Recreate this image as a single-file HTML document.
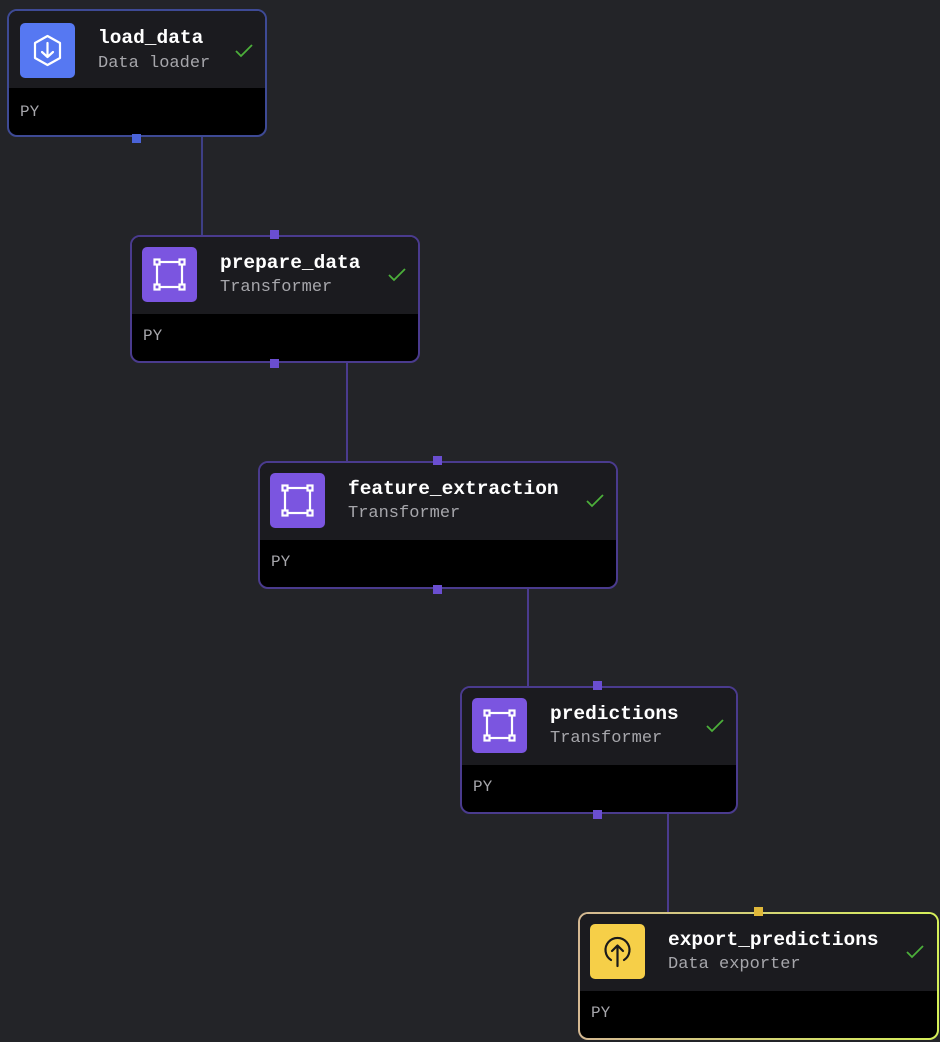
<!DOCTYPE html>
<html><head><style>
body{margin:0;width:940px;height:1042px;background:#232428;position:relative;overflow:hidden;font-family:"Liberation Mono","DejaVu Sans Mono",monospace}
.n{position:absolute;box-sizing:border-box;height:128px;border:2px solid #4a3b8e;border-radius:10px;background:#000;overflow:hidden}
.h{position:absolute;left:0;right:0;top:0;height:77px;background:#1b1b1f}
.ic{position:absolute;left:10px;top:10px;width:55px;height:55px;border-radius:5px;background:#7b55e0}
.ic svg{position:absolute;left:0;top:0}
.t{position:absolute;top:14px;color:#fff;font-weight:bold;font-size:19.5px;line-height:24px}
.s{position:absolute;top:41px;color:#a6a6ab;font-size:17px;line-height:20px}
.ck{position:absolute;top:30px}
.py{position:absolute;left:11px;top:90px;color:#a6a6ab;font-size:16px}
.ln{position:absolute;width:2px;background:#4a3b8e}
.p{position:absolute;width:9px;height:9px;background:#6a4ed0}
</style></head><body>
<div class="ln" style="left:201px;top:137px;height:99px;background:#3e3f86"></div>
<div class="ln" style="left:346px;top:362px;height:100px"></div>
<div class="ln" style="left:527px;top:588px;height:99px"></div>
<div class="ln" style="left:667px;top:813px;height:100px"></div>

<div class="n" style="left:7px;top:9px;width:260px;border-color:#3e4a95">
<div class="h"></div>
<div class="ic" style="left:11px;top:12px;background:#5678f2"><svg width="55" height="55" viewBox="0 0 55 55" fill="none" stroke="#fff" stroke-width="2.2" stroke-linecap="round" stroke-linejoin="round"><path d="M27.5 13 L40 20 L40 35 L27.5 42 L15 35 L15 20 Z"/><path d="M27.5 20 V34 M22 29 L27.5 34 L33 29"/></svg></div>
<div class="t" style="left:89px;top:15px">load_data</div><div class="s" style="left:89px;top:43px">Data loader</div>
<svg class="ck" style="left:225px;top:32px" width="20" height="16" viewBox="0 0 20 16"><path d="M2 8 L7 13 L18 2" fill="none" stroke="#4caf3a" stroke-width="1.8"/></svg>
<div class="py" style="top:92px">PY</div></div>
<div class="p" style="left:132px;top:134px;background:#4a63d8"></div>

<div class="n" style="left:130px;top:235px;width:290px">
<div class="h"></div>
<div class="ic"><svg width="55" height="55" viewBox="0 0 55 55" fill="none" stroke="#fff" stroke-width="2.2"><rect x="15" y="15" width="25" height="25"/><rect x="12.5" y="12.5" width="5" height="5" fill="#7b55e0"/><rect x="37.5" y="12.5" width="5" height="5" fill="#7b55e0"/><rect x="12.5" y="37.5" width="5" height="5" fill="#7b55e0"/><rect x="37.5" y="37.5" width="5" height="5" fill="#7b55e0"/></svg></div>
<div class="t" style="left:88px">prepare_data</div><div class="s" style="left:88px">Transformer</div>
<svg class="ck" style="left:255px" width="20" height="16" viewBox="0 0 20 16"><path d="M2 8 L7 13 L18 2" fill="none" stroke="#4caf3a" stroke-width="1.8"/></svg>
<div class="py">PY</div></div>
<div class="p" style="left:270px;top:230px"></div><div class="p" style="left:270px;top:359px"></div>

<div class="n" style="left:258px;top:461px;width:360px">
<div class="h"></div>
<div class="ic"><svg width="55" height="55" viewBox="0 0 55 55" fill="none" stroke="#fff" stroke-width="2.2"><rect x="15" y="15" width="25" height="25"/><rect x="12.5" y="12.5" width="5" height="5" fill="#7b55e0"/><rect x="37.5" y="12.5" width="5" height="5" fill="#7b55e0"/><rect x="12.5" y="37.5" width="5" height="5" fill="#7b55e0"/><rect x="37.5" y="37.5" width="5" height="5" fill="#7b55e0"/></svg></div>
<div class="t" style="left:88px">feature_extraction</div><div class="s" style="left:88px">Transformer</div>
<svg class="ck" style="left:325px" width="20" height="16" viewBox="0 0 20 16"><path d="M2 8 L7 13 L18 2" fill="none" stroke="#4caf3a" stroke-width="1.8"/></svg>
<div class="py">PY</div></div>
<div class="p" style="left:433px;top:456px"></div><div class="p" style="left:433px;top:585px"></div>

<div class="n" style="left:460px;top:686px;width:278px">
<div class="h"></div>
<div class="ic"><svg width="55" height="55" viewBox="0 0 55 55" fill="none" stroke="#fff" stroke-width="2.2"><rect x="15" y="15" width="25" height="25"/><rect x="12.5" y="12.5" width="5" height="5" fill="#7b55e0"/><rect x="37.5" y="12.5" width="5" height="5" fill="#7b55e0"/><rect x="12.5" y="37.5" width="5" height="5" fill="#7b55e0"/><rect x="37.5" y="37.5" width="5" height="5" fill="#7b55e0"/></svg></div>
<div class="t" style="left:88px">predictions</div><div class="s" style="left:88px">Transformer</div>
<svg class="ck" style="left:243px" width="20" height="16" viewBox="0 0 20 16"><path d="M2 8 L7 13 L18 2" fill="none" stroke="#4caf3a" stroke-width="1.8"/></svg>
<div class="py">PY</div></div>
<div class="p" style="left:593px;top:681px"></div><div class="p" style="left:593px;top:810px"></div>

<div class="n" style="left:578px;top:912px;width:361px;border-color:transparent;background:linear-gradient(#000,#000) padding-box,linear-gradient(90deg,#d4b892,#d6f05a) border-box">
<div class="h"></div>
<div class="ic" style="background:#f6cf48"><svg width="55" height="55" viewBox="0 0 55 55" fill="none" stroke="#1a1a1a" stroke-width="2.2" stroke-linecap="round" stroke-linejoin="round"><path d="M21 36 A12 12 0 1 1 34 36"/><path d="M27.5 42 V22 M22 27 L27.5 21.5 L33 27"/></svg></div>
<div class="t" style="left:88px">export_predictions</div><div class="s" style="left:88px">Data exporter</div>
<svg class="ck" style="left:325px" width="20" height="16" viewBox="0 0 20 16"><path d="M2 8 L7 13 L18 2" fill="none" stroke="#4caf3a" stroke-width="1.8"/></svg>
<div class="py">PY</div></div>
<div class="p" style="left:754px;top:907px;background:#e0b83a"></div>
</body></html>
